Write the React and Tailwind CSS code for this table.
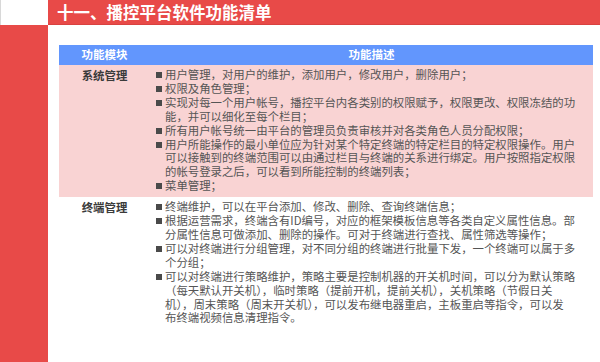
import React from "react";

const font = { fontFamily: '"Noto Sans CJK SC", "Noto Sans", sans-serif' };

const rows = [
  {
    name: "系统管理",
    bg: "bg-[#f9d3d3]",
    items: [
      ["用户管理，对用户的维护，添加用户，修改用户，删除用户；"],
      ["权限及角色管理；"],
      ["实现对每一个用户帐号，播控平台内各类别的权限赋予，权限更改、权限冻结的功", "能，并可以细化至每个栏目；"],
      ["所有用户帐号统一由平台的管理员负责审核并对各类角色人员分配权限；"],
      [
        "用户所能操作的最小单位应为针对某个特定终端的特定栏目的特定权限操作。用户",
        "可以接触到的终端范围可以由通过栏目与终端的关系进行绑定。用户按照指定权限",
        "的帐号登录之后，可以看到所能控制的终端列表；",
      ],
      ["菜单管理；"],
    ],
  },
  {
    name: "终端管理",
    bg: "bg-white",
    items: [
      ["终端维护，可以在平台添加、修改、删除、查询终端信息；"],
      [
        "根据运营需求，终端含有ID编号，对应的框架模板信息等各类自定义属性信息。部",
        "分属性信息可做添加、删除的操作。可对于终端进行查找、属性筛选等操作；",
      ],
      ["可以对终端进行分组管理，对不同分组的终端进行批量下发，一个终端可以属于多", "个分组；"],
      [
        "可以对终端进行策略维护，策略主要是控制机器的开关机时间，可以分为默认策略",
        "（每天默认开关机），临时策略（提前开机，提前关机），关机策略（节假日关",
        "机），周末策略（周末开关机），可以发布继电器重启，主板重启等指令，可以发",
        "布终端视频信息清理指令。",
      ],
    ],
  },
];

export default function App() {
  return (
    <div
      className="w-[600px] h-[362px] grid grid-cols-[48px_1fr] grid-rows-[25px_1fr] bg-white overflow-hidden"
      style={font}
    >
      <div className="bg-white border-l border-[#d8d8d8]" />
      <div className="bg-[#e84a48] flex items-center pl-[9px] border-b border-[#d94240]">
        <span className="text-white text-[16.5px] font-bold leading-none tracking-[0px]">
          十一、播控平台软件功能清单
        </span>
      </div>
      <div className="bg-[#e84a48]" />
      <div className="pl-[11px] pr-[7px] pt-[20px]">
        <div className="grid grid-cols-[91px_1fr]">
          <div className="bg-[#6296fd] h-[20px] flex items-center justify-center text-white text-[11.5px] font-bold">
            功能模块
          </div>
          <div className="bg-[#6296fd] h-[20px] flex items-center justify-center text-white text-[11.5px] font-bold">
            功能描述
          </div>
          {rows.map((row) => (
            <React.Fragment key={row.name}>
              <div className={`${row.bg} pt-[3px] pb-[4px] text-center text-[11.4px] leading-[14px] text-[#3a3a3a] font-semibold`}>
                {row.name}
              </div>
              <div className={`${row.bg} pt-[3px] pb-[4px] pl-[6px] text-[11.4px] leading-[13.9px] text-[#555555]`}>
                {row.items.map((lines, i) => (
                  <div key={i} className="flex">
                    <div className="w-[6px] h-[6px] bg-[#4a4a4a] mt-[4px] mr-[3px] shrink-0" />
                    <div className="whitespace-nowrap">
                      {lines.map((l, j) => (
                        <div key={j}>{l}</div>
                      ))}
                    </div>
                  </div>
                ))}
              </div>
            </React.Fragment>
          ))}
        </div>
      </div>
    </div>
  );
}
